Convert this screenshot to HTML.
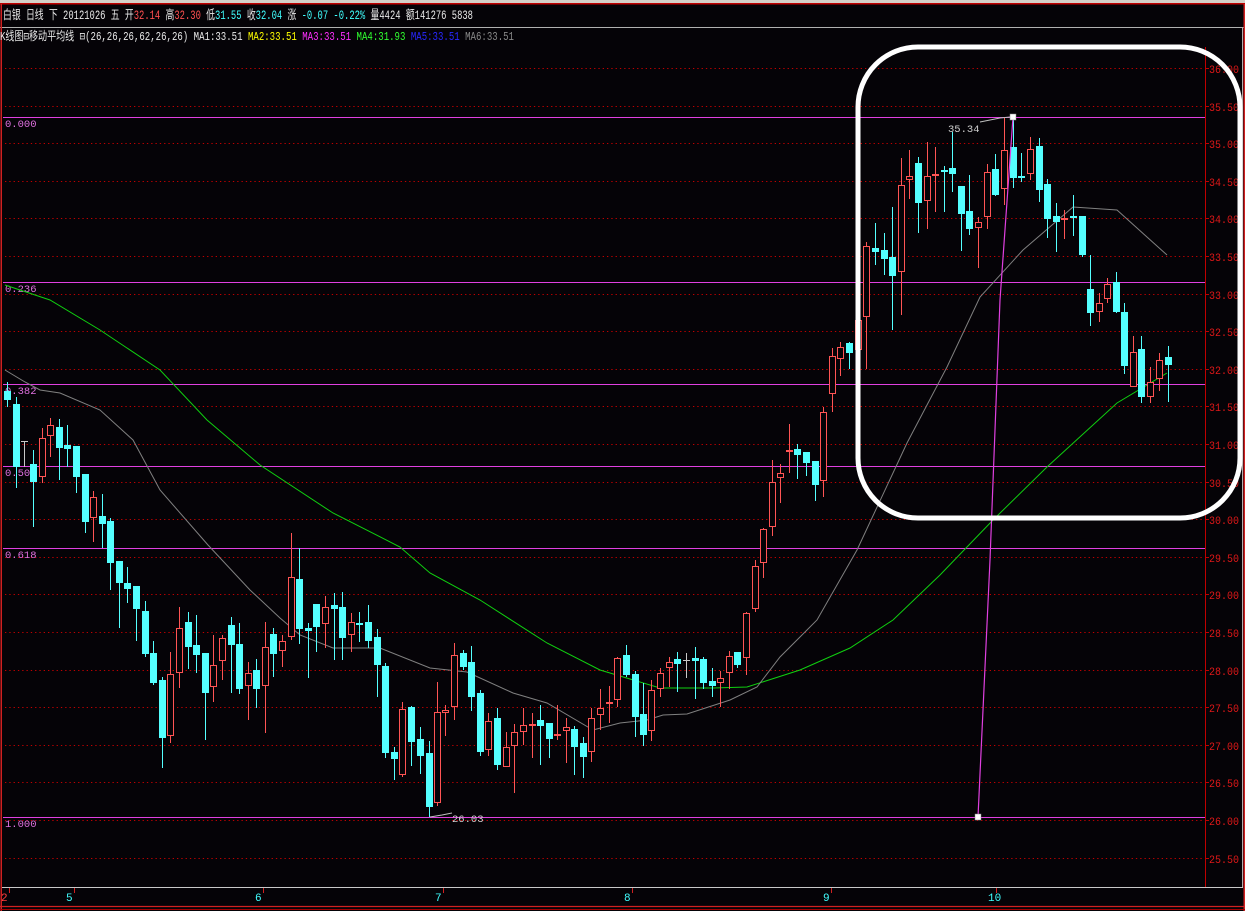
<!DOCTYPE html>
<html><head><meta charset="utf-8"><style>
html,body{margin:0;padding:0;background:#050307;width:1245px;height:911px;overflow:hidden}
svg{display:block}
text{font-family:"Liberation Mono","Noto Sans CJK SC",monospace}
</style></head><body>
<svg id="s" width="1245" height="911" xmlns="http://www.w3.org/2000/svg">
<rect width="1245" height="911" fill="#050307"/>
<rect x="0" y="0" width="1245" height="3" fill="#d4d0c8"/>
<rect x="0" y="3" width="1245" height="1.5" fill="#c00000"/>
<line x1="0" y1="27.5" x2="1245" y2="27.5" stroke="#b0b0b0" stroke-width="1"/>
<rect x="0.5" y="4" width="1.5" height="907" fill="#d02020"/>
<rect x="1242" y="27" width="1" height="860" fill="#b0b0b0"/>
<rect x="1243.5" y="4" width="1.5" height="907" fill="#d02020"/>
<line x1="2" y1="887.5" x2="1243" y2="887.5" stroke="#c8c8c8" stroke-width="1"/>
<line x1="0" y1="906.5" x2="1245" y2="906.5" stroke="#d02020" stroke-width="1.2"/>
<line x1="0" y1="909.5" x2="1245" y2="909.5" stroke="#a00000" stroke-width="1"/>
<text x="3" y="19" font-size="12.5" fill="#e8e8e8" textLength="470" lengthAdjust="spacingAndGlyphs" font-family="Liberation Mono,Noto Sans CJK SC,monospace">白银 日线 下 20121026 五 开<tspan fill="#ff5050">32.14</tspan> 高<tspan fill="#ff5050">32.30</tspan> 低<tspan fill="#40ffff">31.55</tspan> 收<tspan fill="#40ffff">32.04</tspan> 涨 <tspan fill="#40ffff">-0.07 -0.22%</tspan> 量4424 额141276 5838</text>
<text x="0" y="40" font-size="12" fill="#e8e8e8" textLength="514" lengthAdjust="spacingAndGlyphs" font-family="Liberation Mono,Noto Sans CJK SC,monospace">K线图⊟移动平均线 ⊟(26,26,26,62,26,26) MA1:33.51 <tspan fill="#ffff00">MA2:33.51</tspan> <tspan fill="#ff30ff">MA3:33.51</tspan> <tspan fill="#30ff30">MA4:31.93</tspan> <tspan fill="#2828ff">MA5:33.51</tspan> <tspan fill="#888888">MA6:33.51</tspan></text>
<g id="g"></g>
</svg>
<script>
var g=document.getElementById('g'),h='';
for(var k=0;k<22;k++){var y=Math.round(68+37.6*k)+0.5;var p=(36-0.5*k).toFixed(2);
h+='<line x1="5" y1="'+y+'" x2="1204" y2="'+y+'" stroke="#c00000" stroke-width="1" stroke-dasharray="1.3,3"/>';
h+='<line x1="1205" y1="'+y+'" x2="1209" y2="'+y+'" stroke="#c00000"/>';
h+='<text x="1209" y="'+(y+4.5)+'" font-size="11" fill="#e01818" textLength="30" lengthAdjust="spacingAndGlyphs">'+p+'</text>';}
h+='<line x1="1205.5" y1="47" x2="1205.5" y2="887" stroke="#c00000" stroke-width="1"/>';
[[117,'0.000'],[282,'0.236'],[384,'0.382'],[466,'0.500'],[548,'0.618'],[817,'1.000']].forEach(function(f){
h+='<line x1="3" y1="'+(f[0]+0.5)+'" x2="1205" y2="'+(f[0]+0.5)+'" stroke="#e040e0" stroke-width="1"/>';
h+='<text x="5" y="'+(f[0]+10)+'" font-size="10.5" fill="#e070e0">'+f[1]+'</text>';});
function pl(pts,c){h+='<polyline fill="none" stroke="'+c+'" stroke-width="1" points="'+pts+'"/>';}
pl('5,285 50,300 100,330 160,370 207,420 260,465 333,513 400,547 430,573 480,600 547,643 600,670 660,688 713,688 747,687 800,670 850,648 893,620 940,575 993,520 1047,467 1117,403 1167,373','#10d010');
pl('5,370 25,382 40,390 60,393 100,410 133,440 160,490 208,545 250,590 280,618 300,635 333,648 380,648 430,668 467,672 513,693 547,703 593,730 620,723 647,720 663,715 687,714 730,700 757,687 780,657 800,637 817,620 857,550 907,443 947,367 980,297 1023,250 1073,207 1117,210 1167,255','#808080');
var C=[[7,391,400,382,407,'c'],[16,404,467,397,488,'c'],[24,441,467,441,467,'g'],[33,464,482,450,527,'c'],[42,438,477,428,483,'r'],[50,425,436,418,457,'r'],[59,427,448,419,480,'c'],[67,445,449,425,467,'c'],[76,446,477,446,493,'c'],[85,474,522,474,533,'c'],[93,497,518,491,542,'r'],[102,516,524,494,548,'c'],[110,521,563,518,590,'c'],[119,561,583,561,628,'c'],[127,583,589,567,603,'c'],[136,586,609,586,641,'c'],[145,611,654,601,657,'c'],[153,653,683,641,685,'c'],[162,680,738,677,768,'c'],[170,674,736,652,743,'r'],[179,628,673,607,688,'r'],[188,622,647,612,669,'c'],[196,645,655,615,673,'c'],[205,653,693,653,740,'c'],[213,665,687,635,702,'r'],[222,638,661,635,680,'r'],[231,625,645,617,693,'c'],[239,644,689,623,694,'c'],[248,673,686,662,720,'r'],[256,670,689,659,708,'c'],[265,647,686,622,733,'r'],[273,634,654,628,677,'c'],[282,641,651,635,667,'r'],[291,577,637,533,640,'r'],[299,579,629,548,644,'c'],[308,628,631,623,678,'c'],[316,604,627,604,652,'c'],[325,607,624,596,648,'r'],[334,605,609,593,660,'c'],[342,607,638,592,660,'c'],[351,622,635,613,652,'r'],[359,623,625,612,642,'c'],[368,622,641,605,648,'c'],[377,637,665,629,697,'c'],[385,666,753,663,758,'c'],[394,752,759,747,780,'c'],
[402,709,775,702,777,'r'],[411,707,742,706,766,'c'],[420,739,756,727,774,'c'],[429,753,807,741,817,'c'],[437,712,803,682,806,'r'],[445,710,713,705,736,'r'],[454,655,707,643,720,'r'],[463,653,667,650,670,'c'],[471,662,697,646,711,'c'],[480,693,752,690,756,'c'],[488,721,750,713,756,'r'],[497,718,765,708,770,'c'],[506,747,767,732,767,'r'],[514,732,746,724,793,'r'],[523,725,732,708,745,'r'],[532,724,725,713,758,'r'],[540,720,726,705,765,'c'],[549,723,739,723,758,'c'],[557,734,736,705,740,'r'],[566,727,731,718,763,'r'],[574,729,747,726,775,'c'],[583,743,757,737,778,'c'],[591,718,752,708,762,'r'],[600,708,715,689,730,'r'],[609,702,704,686,723,'r'],[617,658,700,657,707,'r'],[626,655,675,645,677,'c'],[635,674,717,671,737,'c'],[643,714,735,683,746,'c'],[651,690,731,680,741,'r'],[660,673,689,668,697,'r'],[669,662,668,657,687,'r'],[677,659,664,652,692,'c'],[686,660,662,653,678,'g'],[695,658,661,647,699,'c'],[703,659,683,657,689,'c'],[712,681,686,668,697,'c'],[720,678,683,671,707,'r'],[729,656,673,651,689,'r'],[737,652,665,652,668,'c'],[746,613,658,612,675,'r'],[755,566,609,560,612,'r'],
[763,529,563,528,578,'r'],[772,482,527,460,536,'r'],[780,473,478,464,503,'r'],[789,450,452,424,473,'r'],[797,449,455,444,479,'c'],[806,452,463,452,476,'c'],[815,461,485,461,501,'c'],[823,412,481,407,497,'r'],[832,356,394,348,412,'r'],[840,347,359,342,376,'r'],[849,343,353,342,369,'c'],[858,320,350,315,370,'r'],[866,246,317,242,369,'r'],[875,248,252,223,265,'c'],[884,250,259,233,275,'c'],[892,257,276,207,330,'c'],[901,185,272,158,315,'r'],[909,176,180,150,199,'r'],[918,163,203,157,233,'c'],[927,176,201,142,229,'r'],[935,174,176,147,212,'r'],[944,170,172,166,212,'c'],[952,168,174,132,192,'c'],[961,186,214,186,251,'c'],[969,211,229,175,235,'c'],[978,222,228,217,268,'r'],[987,172,217,164,229,'r'],[995,169,195,154,196,'c'],[1004,150,189,117,205,'r'],[1013,147,178,117,188,'c'],[1021,176,178,153,182,'c'],[1030,149,174,137,180,'r'],[1039,146,190,138,202,'c'],[1047,184,219,179,238,'c'],[1056,216,222,203,252,'c'],[1064,218,220,210,239,'r'],[1073,216,218,195,236,'c'],[1082,216,255,216,257,'c'],[1090,289,313,255,326,'c'],[1099,303,312,293,322,'r'],[1107,284,299,278,303,'r'],[1116,282,312,272,313,'c'],[1124,312,366,303,374,'c'],[1133,352,387,336,387,'r'],[1141,349,397,336,403,'c'],[1150,382,397,367,403,'r'],[1159,360,379,353,391,'r'],[1168,357,365,346,402,'c']];
C.forEach(function(d){var x=d[0],col=d[5]=='c'?'#54ffff':(d[5]=='r'?'#ff5454':'#c8c8c8');
h+='<line x1="'+(x+0.5)+'" y1="'+d[3]+'" x2="'+(x+0.5)+'" y2="'+d[4]+'" stroke="'+col+'" stroke-width="1"/>';
var bh=Math.max(1,d[2]-d[1]);
if(d[5]=='c')h+='<rect x="'+(x-3)+'" y="'+d[1]+'" width="7" height="'+bh+'" fill="#54ffff"/>';
else if(d[5]=='r'){ if(bh<3)h+='<rect x="'+(x-3)+'" y="'+d[1]+'" width="7" height="2" fill="#ff5454"/>';
 else h+='<rect x="'+(x-2.5)+'" y="'+(d[1]+0.5)+'" width="6" height="'+(bh-1)+'" fill="#050307" stroke="#ff5454" stroke-width="1"/>';}
else h+='<rect x="'+(x-3)+'" y="'+d[1]+'" width="7" height="1" fill="#c8c8c8"/>';});
h+='<polyline fill="none" stroke="#e040e0" stroke-width="1.2" points="978,817 990,560 1000,300 1013,117"/>';
h+='<rect x="975" y="814" width="6" height="6" fill="#fff" stroke="#888" stroke-width="0.5"/>';
h+='<rect x="1010" y="114" width="6" height="6" fill="#fff" stroke="#888" stroke-width="0.5"/>';
h+='<polyline fill="none" stroke="#c0c0c0" points="980,122 1000,118 1010,117"/>';
h+='<text x="948" y="132" font-size="10.5" fill="#d0d0d0">35.34</text>';
h+='<polyline fill="none" stroke="#c0c0c0" points="430,817 442,815 452,813"/>';
h+='<text x="452" y="822" font-size="10.5" fill="#d0d0d0">26.03</text>';
h+='<rect x="858" y="47" width="382" height="471" rx="60" ry="60" fill="none" stroke="#ffffff" stroke-width="5"/>';
[[3,'2','#ff4040'],[68,'5','#40ffff'],[257,'6','#40ffff'],[437,'7','#40ffff'],[626,'8','#40ffff'],[825,'9','#40ffff'],[990,'10','#40ffff']].forEach(function(d){
h+='<line x1="'+(d[0]+6.5)+'" y1="888" x2="'+(d[0]+6.5)+'" y2="893" stroke="#d02020"/>';
h+='<text x="'+(d[0]-2)+'" y="901" font-size="11" fill="'+d[2]+'">'+d[1]+'</text>';});
g.innerHTML=h;
</script>
</body></html>
